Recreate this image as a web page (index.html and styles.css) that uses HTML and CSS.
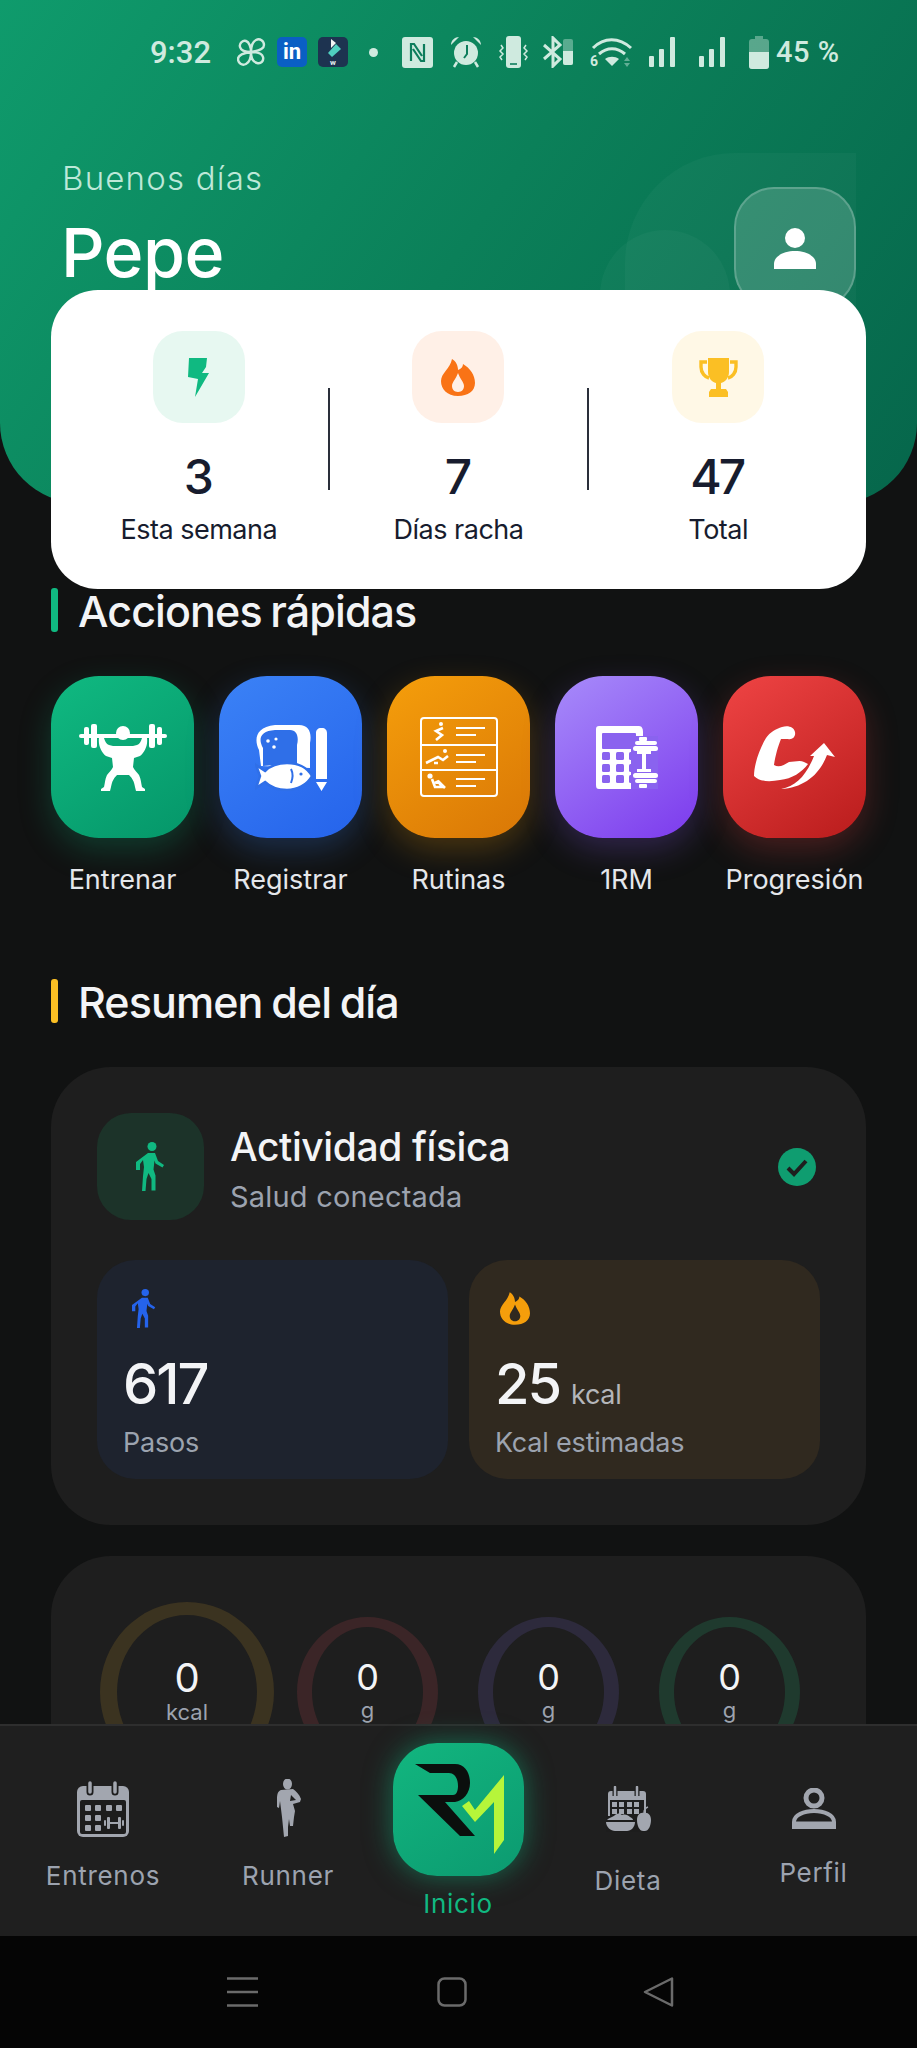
FILE: index.html
```html
<!DOCTYPE html>
<html lang="es">
<head>
    <meta charset="UTF-8">
    <meta name="viewport" content="width=device-width, initial-scale=1.0">
    <title>Inicio</title>
    <link rel="stylesheet" href="styles.css">
</head>
<body>
<div class="screen">
    <main class="scroll">
        <header class="hero">
            <div class="blob blob-a"></div>
            <div class="blob blob-b"></div>

            <div class="statusbar">
                <span class="sb-time">9:32</span>
                <svg class="sb-pin" width="29" height="30" viewBox="0 0 29 30" fill="none" stroke="#cfeadf" stroke-width="2.4"><path d="M14 15C9 15 4 14 3 10S6 3 9 4s5 6 5 11zM14 15c0-5 1-10 5-12s8 1 8 5-6 6-13 7zM14 15c5 0 11 1 12 5s-2 7-6 6-6-5-6-11zM14 15c0 5-1 10-5 12s-8-1-8-5 6-6 13-7z"/></svg>
                <span class="sb-in">in</span>
                <span class="sb-wd">
                    <svg width="30" height="22" viewBox="0 0 30 22"><path d="M13 2l5 4-5 5z" fill="#f2f5f5"/><path d="M18 7l5 5-9 8-4-4z" fill="#4fd0c0"/></svg>
                    <b>w</b>
                </span>
                <span class="sb-dot"></span>
                <svg class="sb-nfc" width="31" height="31" viewBox="0 0 31 31"><rect width="31" height="31" rx="3" fill="#cfeadf"/><path d="M9 24V7h3l8 12M22 7v17h-3L11 12" fill="none" stroke="#0c7d5c" stroke-width="2.2"/></svg>
                <svg class="sb-alarm" width="32" height="32" viewBox="0 0 32 32"><path d="M1 9c0-5 4-8 8-8zM31 9c0-5-4-8-8-8z" fill="#cfeadf"/><circle cx="16" cy="17" r="12" fill="#cfeadf"/><path d="M17 9v9l-3 4" fill="none" stroke="#0c7d5c" stroke-width="2"/><path d="M7 26l-3 5M25 26l3 5" stroke="#cfeadf" stroke-width="2.5"/></svg>
                <svg class="sb-vib" width="33" height="32" viewBox="0 0 33 32"><rect x="9" y="0" width="15" height="32" rx="3" fill="#cfeadf"/><path d="M13 28h7" stroke="#0c7d5c" stroke-width="1.6"/><path d="M4 9l2 3-3 3 3 3-3 3 2 3M29 9l-2 3 3 3-3 3 3 3-2 3" fill="none" stroke="#cfeadf" stroke-width="1.5"/></svg>
                <svg class="sb-bt" width="31" height="32" viewBox="0 0 31 32"><path d="M2 9l16 14-7 7V2l7 7L2 23" fill="none" stroke="#cfeadf" stroke-width="3"/><rect x="21" y="3" width="10" height="26" rx="2" fill="#cfeadf" opacity=".4"/><path d="M21 15h10v12a2 2 0 0 1-2 2h-6a2 2 0 0 1-2-2z" fill="#cfeadf"/></svg>
                <svg class="sb-wifi" width="43" height="32" viewBox="0 0 43 32" fill="none" stroke="#cfeadf" stroke-width="3"><path d="M3 12C14 1 29 1 41 12M9 18c8-7 18-7 26 0"/><path d="M15 23c4-3 10-3 14 0l-7 7z" fill="#cfeadf" stroke="none"/><text x="0" y="30" class="sb-six">6</text><path d="M37 21l3 4h-6zM37 31l3-4h-6z" fill="#cfeadf" stroke="none" opacity=".45"/></svg>
                <svg class="sb-sig" width="34" height="32" viewBox="0 0 34 32" fill="#cfeadf"><rect x="1" y="20" width="5" height="11" rx="1"/><rect x="11" y="13" width="5" height="18" rx="1"/><rect x="22" y="1" width="5" height="30" rx="1"/></svg>
                <svg class="sb-sig2" width="34" height="32" viewBox="0 0 34 32" fill="#cfeadf"><rect x="1" y="20" width="5" height="11" rx="1"/><rect x="11" y="13" width="5" height="18" rx="1"/><rect x="22" y="1" width="5" height="30" rx="1"/></svg>
                <svg class="sb-bat" width="20" height="33" viewBox="0 0 20 33"><path d="M6 0h8v3h3a3 3 0 0 1 3 3v24a3 3 0 0 1-3 3H3a3 3 0 0 1-3-3V6a3 3 0 0 1 3-3h3z" fill="#cfeadf" opacity=".4"/><path d="M0 16h20v14a3 3 0 0 1-3 3H3a3 3 0 0 1-3-3z" fill="#cfeadf"/></svg>
                <span class="sb-pct">45 %</span>
            </div>

            <div class="greeting">
                <div>
                    <p class="hello">Buenos días</p>
                    <h1 class="name">Pepe</h1>
                </div>
                <div class="avatar">
                    <svg width="42" height="41" viewBox="0 0 42 41" fill="#fff"><ellipse cx="21" cy="10" rx="10" ry="10"/><path d="M0 41v-5c0-8 10-13 21-13s21 5 21 13v5z"/></svg>
                </div>
            </div>
        </header>

        <section class="stats">
            <div class="stat">
                <div class="stat-icon bg-green">
                    <svg width="21" height="39" viewBox="0 0 21 39" fill="#10b981"><path d="M1 0h18l-1 9-4 6h7L7 39l3-18-10-2z"/></svg>
                </div>
                <div class="stat-num">3</div>
                <div class="stat-label">Esta semana</div>
            </div>
            <div class="stat-line"></div>
            <div class="stat">
                <div class="stat-icon bg-orange">
                    <svg width="34" height="37" viewBox="0 0 34 37"><path fill="#f97316" fill-rule="evenodd" d="M17 37C6 37 0 30 0 22 0 14 9 10 11 0c4 2 6 7 6 11 3-1 5-3 5-6 7 4 12 11 12 19 0 8-7 13-17 13zm0-4c4 0 6-3 6-6 0-4-4-7-6-13-2 6-6 9-6 13 0 3 2 6 6 6z"/></svg>
                </div>
                <div class="stat-num">7</div>
                <div class="stat-label">Días racha</div>
            </div>
            <div class="stat-line"></div>
            <div class="stat">
                <div class="stat-icon bg-yellow">
                    <svg width="39" height="39" viewBox="0 0 39 39" fill="#fbbf24"><path d="M9 0h21v14c0 6-4 10-8 11v6h5l2 3v5H10v-5l2-3h5v-6c-4-1-8-5-8-11z"/><path d="M8 4H2v5c0 6 4 10 8 11M31 4h6v5c0 6-4 10-8 11" fill="none" stroke="#fbbf24" stroke-width="3.4"/></svg>
                </div>
                <div class="stat-num">47</div>
                <div class="stat-label">Total</div>
            </div>
        </section>

        <div class="section-title first"><span class="bar bar-green"></span><h2>Acciones rápidas</h2></div>

        <div class="actions">
            <div class="action">
                <div class="tile tile-green">
                    <svg width="88" height="67" viewBox="0 0 88 67" fill="#fff">
                        <rect x="0" y="10" width="88" height="4" rx="2"/>
                        <rect x="5" y="3" width="5" height="18" rx="2"/><rect x="12" y="0" width="6" height="24" rx="2"/>
                        <rect x="70" y="0" width="6" height="24" rx="2"/><rect x="78" y="3" width="5" height="18" rx="2"/>
                        <circle cx="44" cy="9" r="7"/>
                        <path d="M20 14h5c1 3 2 6 5 7l4 1h20l4-1c3-1 4-4 5-7h5c1 7-2 14-7 18l-6 2-1 9c1 3 4 5 6 8 2 4 2 8 3 12l3 2v2h-9l-1-4c-1-6-3-9-6-12H38c-3 3-5 6-6 12l-1 4h-9v-2l3-2c1-4 1-8 3-12 2-3 5-5 6-8l-1-9-6-2c-5-4-8-11-7-18z"/>
                    </svg>
                </div>
                <span class="action-label">Entrenar</span>
            </div>
            <div class="action">
                <div class="tile tile-blue">
                    <svg width="72" height="67" viewBox="0 0 72 67">
                        <path fill="#fff" d="M4 26C-1 16 0 3 20 1h24c10 0 13 8 11 18v25L6 42z"/>
                        <path fill="#2f6fe8" d="M8 24C3 15 5 7 20 6h15c7 0 9 7 7 15v18l-34 3z"/>
                        <g fill="#fff"><circle cx="13" cy="17" r="1.8"/><circle cx="21" cy="15" r="1.6"/><circle cx="19" cy="23" r="1.8"/></g>
                        <path fill="#fff" stroke="#2f6fe8" stroke-width="2.5" d="M1 41l9 6c6-6 14-8 22-8 10 0 20 4 25 13-5 9-15 14-25 14-8 0-16-2-22-8l-9 6 4-12z"/>
                        <path fill="none" stroke="#2f6fe8" stroke-width="2" d="M36 45c2 4 2 9 0 14"/>
                        <circle cx="46" cy="50" r="1.6" fill="#2f6fe8"/>
                        <path fill="#fff" d="M61 9c0-3 2-5 5-5h1c3 0 5 2 5 5v46H61zM61 58h11l-5.500 9z"/>
                    </svg>
                </div>
                <span class="action-label">Registrar</span>
            </div>
            <div class="action">
                <div class="tile tile-orange">
                    <svg width="78" height="80" viewBox="0 0 78 80" fill="none" stroke="#fff" stroke-width="2">
                        <rect x="1" y="1" width="76" height="78" rx="3"/>
                        <path d="M1 28h76M1 53h76"/>
                        <path d="M36 11h29M36 18h20M36 38h29M36 45h20M36 62h29M36 69h20"/>
                        <circle cx="21" cy="7" r="2" fill="#fff" stroke="none"/>
                        <path d="M23 11l-7 3 6 4-6 5" stroke-width="2.6"/>
                        <circle cx="25" cy="34" r="2" fill="#fff" stroke="none"/>
                        <path d="M6 46l12-6 5 3 5-4M14 46h4" stroke-width="2.6"/>
                        <circle cx="10" cy="59" r="2.600" fill="#fff" stroke="none"/>
                        <path d="M12 62l3 8h7l-4-6 7 7M15 66l4-2" stroke-width="2.6"/>
                    </svg>
                </div>
                <span class="action-label">Rutinas</span>
            </div>
            <div class="action">
                <div class="tile tile-purple">
                    <svg width="62" height="63" viewBox="0 0 62 63">
                        <path fill="#fff" d="M3 0h40c3 0 4 3 4 6v53c0 3-1 4-4 4H3c-2 0-3-1-3-4V3c0-2 1-3 3-3z"/>
                        <rect x="6" y="7" width="34" height="16" rx="1" fill="#8a63ef"/>
                        <g fill="#8a63ef">
                            <rect x="6" y="26" width="8" height="8" rx="1.500"/><rect x="20" y="26" width="8" height="8" rx="1.500"/><rect x="33" y="26" width="8" height="8" rx="1.500"/>
                            <rect x="6" y="38" width="8" height="8" rx="1.500"/><rect x="20" y="38" width="8" height="8" rx="1.500"/><rect x="33" y="38" width="8" height="8" rx="1.500"/>
                            <rect x="6" y="49" width="8" height="8" rx="1.500"/><rect x="20" y="49" width="8" height="8" rx="1.500"/><rect x="33" y="49" width="8" height="8" rx="1.500"/>
                        </g>
                        <rect x="35" y="10" width="27" height="53" fill="#8a63ef"/>
                        <g fill="#fff">
                            <rect x="43" y="11" width="8" height="4" rx="1"/><rect x="39" y="15" width="22" height="4" rx="2"/><rect x="37" y="20" width="25" height="5" rx="2.500"/>
                            <rect x="46" y="25" width="4" height="21"/><rect x="41" y="25" width="14" height="3"/><rect x="41" y="43" width="14" height="3"/>
                            <rect x="37" y="47" width="25" height="5" rx="2.500"/><rect x="39" y="53" width="22" height="4" rx="2"/><rect x="43" y="58" width="8" height="4" rx="1"/>
                        </g>
                    </svg>
                </div>
                <span class="action-label">1RM</span>
            </div>
            <div class="action">
                <div class="tile tile-red">
                    <svg width="81" height="63" viewBox="0 0 81 63" fill="#fff">
                        <path d="M28 1C34-1 40 1 41 6c1 5-3 8-7 7h-7c-3 7-6 18-7 26 5 3 10 0 15-3 5 0 11-2 15 0l4 2C48 46 38 53 26 54 16 56 6 56 0 50 0 38 6 22 12 12 16 6 22 3 28 1z"/>
                        <path d="M27 63c15-3 25-13 33-33l-4 0L70 17l11 14-8-2C66 48 50 62 27 63z"/>
                    </svg>
                </div>
                <span class="action-label">Progresión</span>
            </div>
        </div>

        <div class="section-title second"><span class="bar bar-yellow"></span><h2>Resumen del día</h2></div>

        <section class="card activity">
            <div class="activity-head">
                <div class="activity-icon">
                    <svg width="29" height="49" viewBox="0 0 29 49" fill="#10b981"><circle cx="16" cy="4.500" r="4.500"/><path d="M12 11h7l3 8 6 4-1.500 2.500-7-4-1-3-1 9 2 6v15h-4V37l-3-6-2 6-1 12H6l1-15 1-9-1-7-3 4v6H0v-8z"/></svg>
                </div>
                <div class="activity-text">
                    <div class="activity-title">Actividad física</div>
                    <div class="activity-sub">Salud conectada</div>
                </div>
                <svg class="check" width="38" height="38" viewBox="0 0 38 38"><circle cx="19" cy="19" r="19" fill="#0f9d70"/><path d="M10 20l6 6 12-13" fill="none" stroke="#1e1e1e" stroke-width="4"/></svg>
            </div>
            <div class="metrics">
                <div class="metric metric-blue">
                    <svg class="metric-icon icon-steps" width="24" height="39" viewBox="0 0 29 49" fill="#2563eb" preserveAspectRatio="none"><circle cx="16" cy="4.500" r="4.500"/><path d="M12 11h7l3 8 6 4-1.500 2.500-7-4-1-3-1 9 2 6v15h-4V37l-3-6-2 6-1 12H6l1-15 1-9-1-7-3 4v6H0v-8z"/></svg>
                    <div class="metric-num">617</div>
                    <div class="metric-label">Pasos</div>
                </div>
                <div class="metric metric-brown">
                    <svg class="metric-icon icon-kcal" width="30" height="39" viewBox="0 0 34 37"><path fill="#f59e0b" fill-rule="evenodd" d="M17 37C6 37 0 30 0 22 0 14 9 10 11 0c4 2 6 7 6 11 3-1 5-3 5-6 7 4 12 11 12 19 0 8-7 13-17 13zm0-4c4 0 6-3 6-6 0-4-4-7-6-13-2 6-6 9-6 13 0 3 2 6 6 6z"/></svg>
                    <div class="metric-num">25 <small>kcal</small></div>
                    <div class="metric-label">Kcal estimadas</div>
                </div>
            </div>
        </section>

        <section class="card macros">
            <div class="ring ring-big ring-yellow"><span class="ring-num">0</span><span class="ring-unit">kcal</span></div>
            <div class="ring ring-red"><span class="ring-num">0</span><span class="ring-unit">g</span></div>
            <div class="ring ring-violet"><span class="ring-num">0</span><span class="ring-unit">g</span></div>
            <div class="ring ring-green"><span class="ring-num">0</span><span class="ring-unit">g</span></div>
        </section>
    </main>

    <nav class="bottom-nav">
        <div class="nav-item nav-entrenos">
            <svg width="52" height="56" viewBox="0 0 52 56">
                <rect x="0" y="5" width="52" height="51" rx="6" fill="#a2a6af"/>
                <rect x="3" y="19" width="46" height="34" rx="2" fill="#1d1d1d"/>
                <path d="M13 2v9M38 2v9" stroke="#1d1d1d" stroke-width="7" stroke-linecap="round"/>
                <path d="M13 2v9M38 2v9" stroke="#a2a6af" stroke-width="3.500" stroke-linecap="round"/>
                <g fill="#a2a6af">
                    <rect x="8" y="24" width="6" height="6" rx="1"/><rect x="18" y="24" width="6" height="6" rx="1"/><rect x="29" y="24" width="6" height="6" rx="1"/><rect x="39" y="24" width="6" height="6" rx="1"/>
                    <rect x="8" y="34" width="6" height="6" rx="1"/><rect x="18" y="34" width="6" height="6" rx="1"/>
                    <rect x="8" y="44" width="6" height="6" rx="1"/><rect x="18" y="44" width="6" height="6" rx="1"/>
                    <rect x="30" y="36" width="3" height="12" rx="1"/><rect x="41" y="36" width="3" height="12" rx="1"/><rect x="33" y="41" width="8" height="2"/>
                    <rect x="27" y="39" width="2" height="6" rx="1"/><rect x="45" y="39" width="2" height="6" rx="1"/>
                </g>
            </svg>
            <span class="nav-label">Entrenos</span>
        </div>
        <div class="nav-item nav-runner">
            <svg width="27" height="59" viewBox="0 0 27 59" fill="#a2a6af">
                <ellipse cx="12.500" cy="5" rx="4.500" ry="5.500"/>
                <path d="M6 11l12-1c3 2 6 5 8 10l-1 3-7 2 2 7-1 6-1 9h-3l-1-7-1 8v9l-4 1-1-10-1-10-1-8-1-8-1 7-2-1v-8c0-5 1-8 4-9zM16 16l-1 6 6-1z"/>
            </svg>
            <span class="nav-label">Runner</span>
        </div>
        <div class="nav-item nav-inicio">
            <div class="logo">
                <svg width="131" height="131" viewBox="0 0 131 131">
                    <path fill="#0b0f0d" d="M22 21h40c10 0 15 9 15 19 0 10-7 18-15 19h-10l30 34H67L25 52h35c4 0 5-5 5-9 0-7-3-13-9-13H37z"/>
                    <path fill="#b6f53a" d="M69 63l7-5 6 9 29-35v65l-10 14V59L82 79z"/>
                </svg>
            </div>
            <span class="nav-label nav-label-on">Inicio</span>
        </div>
        <div class="nav-item nav-dieta">
            <svg width="45" height="46" viewBox="0 0 45 46">
                <rect x="2" y="5" width="38" height="34" rx="3" fill="#a2a6af"/>
                <rect x="4" y="14" width="34" height="22" fill="#1d1d1d"/>
                <path d="M9 1v9M31 1v9" stroke="#1d1d1d" stroke-width="5"/>
                <path d="M9 1v9M31 1v9" stroke="#a2a6af" stroke-width="2.500" stroke-linecap="round"/>
                <g fill="#a2a6af">
                    <rect x="6" y="16" width="5" height="5"/><rect x="13" y="16" width="5" height="5"/><rect x="21" y="16" width="5" height="5"/><rect x="28" y="16" width="5" height="5"/>
                    <rect x="6" y="23" width="5" height="5"/><rect x="13" y="23" width="5" height="5"/><rect x="21" y="23" width="5" height="5"/><rect x="28" y="23" width="5" height="5"/>
                </g>
                <path fill="#1d1d1d" d="M0 30h44v16H0z"/>
                <path fill="#a2a6af" d="M1 34c3-3 6-3 8-5 3-2 5-2 7 0 3-1 6 0 8 2 2 1 3 2 3 3zM0 36h29c0 5-4 9-8 9H9c-4 0-9-4-9-9z"/>
                <path fill="#a2a6af" d="M38 27c4-1 7 2 7 7 0 6-3 12-7 11-4 1-7-5-7-11 0-5 3-8 7-7z"/>
                <path d="M38 27c0-3 1-5 4-6" fill="none" stroke="#a2a6af" stroke-width="1.500"/>
            </svg>
            <span class="nav-label">Dieta</span>
        </div>
        <div class="nav-item nav-perfil">
            <svg width="44" height="41" viewBox="0 0 44 41" fill="none" stroke="#a2a6af">
                <circle cx="22" cy="10" r="8" stroke-width="5"/>
                <path d="M2 39v-5c0-7 10-11 20-11s20 4 20 11v5z" stroke-width="4"/>
                <path d="M2 36h40" stroke-width="5"/>
            </svg>
            <span class="nav-label">Perfil</span>
        </div>
    </nav>

    <div class="system-bar">
        <svg class="sys-menu" width="31" height="30" viewBox="0 0 31 30" stroke="#6b6b6b" stroke-width="2.500"><path d="M0 1.500h31M0 15h31M0 28.500h31"/></svg>
        <svg class="sys-home" width="30" height="30" viewBox="0 0 30 30" fill="none" stroke="#6b6b6b" stroke-width="2.500"><rect x="1.500" y="1.500" width="27" height="27" rx="6"/></svg>
        <svg class="sys-back" width="31" height="30" viewBox="0 0 31 30" fill="none" stroke="#6b6b6b" stroke-width="2.500" stroke-linejoin="round"><path d="M29 1.500v27L2 15z"/></svg>
    </div>
</div>
</body>
</html>
```

FILE: styles.css
```css
* { box-sizing: border-box; }
html, body { margin: 0; padding: 0; background: #111212; }
body { font-family: "Inter", "Liberation Sans", sans-serif; }
h1, h2, p { margin: 0; }

.screen { width: 917px; height: 2048px; display: flex; flex-direction: column; overflow: hidden; }
.scroll { flex: 1; min-height: 0; overflow: hidden; background: #111212; }

/* header */
.hero { position: relative; height: 503px; padding-top: 37px; overflow: hidden; border-radius: 0 0 80px 80px; background: linear-gradient(125deg, #0f9b6c 0%, #0b8059 50%, #06664b 100%); }
.blob { position: absolute; background: rgba(255, 255, 255, 0.03); }
.blob-a { left: 625px; top: 153px; width: 231px; height: 240px; border-radius: 110px 0 0 0; }
.blob-b { left: 600px; top: 230px; width: 130px; height: 130px; border-radius: 50%; }

.statusbar { position: relative; display: flex; align-items: center; height: 30px; padding-left: 150px; font-family: "Roboto", sans-serif; color: #cfeadf; }
.sb-time { font-size: 31px; font-weight: 500; width: 65px; }
.sb-pin { margin-left: 22px; }
.sb-in { margin-left: 11px; width: 30px; height: 30px; border-radius: 5px; background: #0a5fc4; color: #fff; font-size: 22px; font-weight: 700; text-align: center; line-height: 29px; }
.sb-wd { margin-left: 11px; width: 30px; height: 30px; border-radius: 5px; background: #1d3350; display: flex; flex-direction: column; align-items: center; }
.sb-wd b { color: #e6eef0; font-size: 8px; line-height: 8px; }
.sb-dot { margin-left: 21px; width: 9px; height: 9px; border-radius: 50%; background: #cfeadf; }
.sb-nfc { margin-left: 24px; }
.sb-alarm { margin-left: 17px; }
.sb-vib { margin-left: 15px; }
.sb-bt { margin-left: 12px; }
.sb-wifi { margin-left: 17px; overflow: visible; }
.sb-six { font-size: 14px; font-weight: 700; fill: #cfeadf; stroke: none; }
.sb-sig { margin-left: 15px; }
.sb-sig2 { margin-left: 16px; }
.sb-bat { margin-left: 17px; }
.sb-pct { margin-left: 7px; font-size: 29px; font-weight: 500; letter-spacing: 0.5px; white-space: nowrap; }

.greeting { position: relative; display: flex; justify-content: space-between; align-items: flex-start; margin-top: 91px; padding: 0 61px 0 62px; }
.hello { font-size: 33px; line-height: 40px; font-weight: 300; letter-spacing: 1.2px; color: #bde8d8; }
.name { margin-top: 16px; font-size: 68px; line-height: 76px; font-weight: 500; color: #fff; letter-spacing: -0.6px; margin-left: -1px; }
.avatar { margin-top: 29px; width: 122px; height: 122px; padding-top: 39px; border-radius: 40px; border: 2px solid rgba(255, 255, 255, 0.2); background: rgba(255, 255, 255, 0.16); display: flex; justify-content: center; align-items: flex-start; }

/* stats card */
.stats { position: relative; margin: -213px 51px 0; height: 299px; padding: 0 19px; border-radius: 47px; background: #fff; display: grid; grid-template-columns: 1fr 2px 1fr 2px 1fr; }
.stat { display: flex; flex-direction: column; align-items: center; padding-top: 41px; }
.stat-line { margin-top: 98px; height: 102px; background: #2a2f3a; }
.stat-icon { width: 92px; height: 92px; border-radius: 30px; display: flex; align-items: center; justify-content: center; }
.bg-green { background: #e7f8f1; }
.bg-orange { background: #fff0e7; }
.bg-yellow { background: #fff8e6; }
.stat-num { margin-top: 26px; font-size: 48px; line-height: 56px; font-weight: 500; color: #171c2e; letter-spacing: -3px; padding-right: 3px; }
.stat-label { margin-top: 8px; font-size: 27px; line-height: 34px; color: #171c2e; letter-spacing: -0.5px; white-space: nowrap; }

/* section headings */
.section-title { display: flex; align-items: center; gap: 20px; margin-left: 51px; height: 44px; color: #f3f4f6; }
.section-title.first { margin-top: -1px; }
.section-title.second { margin-top: 81px; }
.section-title h2 { padding-top: 2px; font-size: 43px; font-weight: 500; letter-spacing: -0.9px; word-spacing: -2px; white-space: nowrap; }
.bar { width: 7px; height: 44px; border-radius: 3px; }
.bar-green { background: #10b981; }
.bar-yellow { background: #fbbf24; }

/* quick actions */
.actions { display: grid; grid-template-columns: repeat(5, 143px); column-gap: 25px; margin: 44px 51px 0; }
.action { display: flex; flex-direction: column; align-items: center; }
.tile { width: 143px; height: 162px; border-radius: 48px; display: flex; align-items: center; justify-content: center; }
.tile-green { background: linear-gradient(145deg, #10b981, #059669); box-shadow: 0 12px 32px rgba(16, 185, 129, 0.25); }
.tile-blue { background: linear-gradient(145deg, #3b82f6, #2563eb); box-shadow: 0 12px 32px rgba(59, 130, 246, 0.25); }
.tile-orange { background: linear-gradient(145deg, #f59e0b, #d97706); box-shadow: 0 12px 32px rgba(245, 158, 11, 0.25); }
.tile-purple { background: linear-gradient(145deg, #a78bfa, #7c3aed); box-shadow: 0 12px 32px rgba(139, 92, 246, 0.25); }
.tile-red { background: linear-gradient(145deg, #ef4444, #b91c1c); box-shadow: 0 12px 32px rgba(239, 68, 68, 0.25); }
.action-label { margin-top: 24px; font-size: 27px; line-height: 36px; color: #e5e7eb; white-space: nowrap; }

/* cards */
.card { margin: 0 51px; border-radius: 60px; background: #1e1e1e; }
.activity { margin-top: 44px; height: 458px; padding: 46px; }
.activity-head { display: flex; align-items: flex-start; }
.activity-icon { width: 107px; height: 107px; border-radius: 34px; background: #1c3329; display: flex; align-items: center; justify-content: center; flex: none; }
.activity-text { flex: 1; margin-left: 26px; padding-top: 11px; }
.activity-title { font-size: 39px; line-height: 46px; font-weight: 500; color: #f3f4f6; letter-spacing: -0.4px; }
.activity-sub { margin-top: 9px; font-size: 29px; line-height: 36px; color: #9ca3af; letter-spacing: 0.2px; }
.check { align-self: center; margin-right: 4px; }

.metrics { display: grid; grid-template-columns: 351px 351px; column-gap: 21px; margin-top: 40px; }
.metric { height: 219px; padding: 29px 26px 0; border-radius: 38px; }
.metric-blue { background: #1e232e; }
.metric-brown { background: #30291f; }
.metric-icon { display: block; }
.icon-steps { margin-left: 9px; }
.icon-kcal { margin-left: 5px; }
.metric-num { margin-top: 23px; font-size: 56px; line-height: 66px; font-weight: 500; color: #f3f4f6; letter-spacing: -2px; white-space: nowrap; }
.metric-num small { margin-left: -2px; font-size: 27px; line-height: 1; font-weight: 400; color: #b4b6ba; letter-spacing: -0.3px; }
.metric-label { margin-top: 9px; font-size: 27px; line-height: 34px; color: #9ca3af; letter-spacing: -0.2px; }

.macros { margin-top: 31px; height: 400px; padding: 46px 0 0 49px; display: flex; align-items: flex-start; }
.ring { width: 141px; height: 150px; margin-top: 15px; margin-left: 40px; border-radius: 50%; border-style: solid; border-width: 10px 15px; display: flex; flex-direction: column; align-items: center; color: #f3f4f6; padding-top: 30px; }
.ring-big { width: 174px; height: 180px; margin-top: 0; margin-left: 0; border-width: 13px 17px; padding-top: 42px; }
.ring-big + .ring { margin-left: 23px; }
.ring-yellow { border-color: #3b3320; }
.ring-red { border-color: #3b2527; }
.ring-violet { border-color: #2d2a3c; }
.ring-green { border-color: #1f3a2e; }
.ring-num { font-size: 36px; line-height: 40px; }
.ring-big .ring-num { font-size: 40px; line-height: 42px; }
.ring-unit { font-size: 22px; line-height: 26px; color: #9ca3af; }

/* bottom navigation */
.bottom-nav { position: relative; flex: none; height: 212px; border-top: 2px solid #2e2e2e; background: #1f1f1f; display: grid; grid-template-columns: 206px 164px 176px 164px 207px; }
.nav-item { display: flex; flex-direction: column; align-items: center; }
.nav-label { font-size: 26px; line-height: 34px; color: #9ca3af; letter-spacing: 0.7px; white-space: nowrap; }
.nav-label-on { color: #10b981; }
.nav-entrenos { padding-top: 55px; }
.nav-entrenos .nav-label { margin-top: 22px; }
.nav-runner { padding-top: 53px; }
.nav-runner .nav-label { margin-top: 21px; }
.nav-dieta { padding-top: 60px; }
.nav-dieta .nav-label { margin-top: 32px; }
.nav-perfil { padding-top: 62px; }
.nav-perfil .nav-label { margin-top: 27px; }
.nav-inicio { padding-top: 17px; }
.nav-inicio .nav-label { margin-top: 11px; }
.logo { width: 131px; height: 133px; border-radius: 44px; background: linear-gradient(145deg, #12b67f, #0c9a70); box-shadow: 0 0 28px rgba(16, 185, 129, 0.5); }
.logo svg { display: block; }

.system-bar { flex: none; height: 112px; padding: 41px 0 0 227px; background: #050505; display: flex; align-items: flex-start; }
.sys-home { margin-left: 179px; }
.sys-back { margin-left: 176px; }
```
